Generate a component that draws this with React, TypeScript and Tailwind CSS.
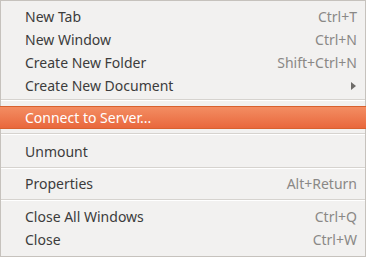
const groups: { label: string; shortcut?: string; submenu?: boolean; active?: boolean }[][] = [
  [
    { label: "New Tab", shortcut: "Ctrl+T" },
    { label: "New Window", shortcut: "Ctrl+N" },
    { label: "Create New Folder", shortcut: "Shift+Ctrl+N" },
    { label: "Create New Document", submenu: true },
  ],
  [{ label: "Connect to Server...", active: true }],
  [{ label: "Unmount" }],
  [{ label: "Properties", shortcut: "Alt+Return" }],
  [
    { label: "Close All Windows", shortcut: "Ctrl+Q" },
    { label: "Close", shortcut: "Ctrl+W" },
  ],
];

// separator boxes above groups 1..4 (height + where the line sits)
const seps = ["h-[9px] pt-[2px]", "h-[11px] pt-[4px]", "h-[9px] pt-[4px]", "h-[10px] pt-[4px]"];

export default function App() {
  return (
    <div
      className="flex h-[257px] w-[366px] flex-col border border-[#c6c2bd] bg-[#f2f1f0] pt-[4px] text-[14px] text-[#3c3c3c]"
      style={{ fontFamily: '"Noto Sans", "Open Sans", sans-serif' }}
    >
      {groups.map((group, gi) => (
        <div key={gi} className="flex flex-col">
          {gi > 0 && (
            <div className={`flex flex-col ${seps[gi - 1]}`}>
              <div className="h-px bg-[#d6d3cf]" />
              <div className="h-px bg-white" />
            </div>
          )}
          {group.map((item) => (
            <div
              key={item.label}
              className={
                item.active
                  ? "-mx-px flex h-[23px] items-center justify-between border-y border-[#d8612f] bg-gradient-to-b from-[#f38d62] to-[#e9673c] pl-[25px] pr-[9px] text-white"
                  : "flex h-[23px] items-center justify-between pl-[24px] pr-[8px]"
              }
            >
              <span>{item.label}</span>
              {item.shortcut && <span className="text-[#8a8886]">{item.shortcut}</span>}
              {item.submenu && (
                <svg width="5" height="8" viewBox="0 0 5 8" className="mr-[1px]">
                  <path d="M0 0 L5 4 L0 8 Z" fill="#6e6c69" />
                </svg>
              )}
            </div>
          ))}
        </div>
      ))}
    </div>
  );
}
